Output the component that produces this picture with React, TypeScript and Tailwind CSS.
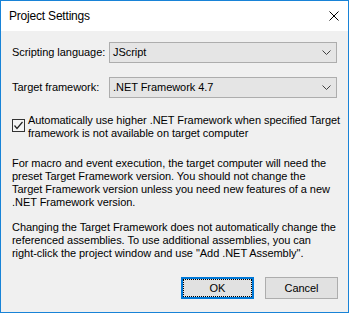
function Combo({ value }: { value: string }) {
    return (
        <div className="flex h-[21px] w-[228px] items-center justify-between border border-[#adadad] bg-[#e5e5e5] pl-[3px] pr-[4px]">
            <span>{value}</span>
            <svg width="9" height="5" viewBox="0 0 9 5" className="mr-[1px]">
                <path d="M0.5 0.5 L4.5 4.5 L8.5 0.5" fill="none" stroke="#404040" strokeWidth="1" />
            </svg>
        </div>
    );
}

export default function App() {
    return (
        <div
            className="flex h-[313px] w-[349px] flex-col border border-[#1883d7] text-[11px] leading-[13px] text-black"
            style={{ fontFamily: '"Liberation Sans", Arial, sans-serif' }}
        >
            <header className="flex h-[30px] shrink-0 items-center justify-between bg-white pl-[8px] pr-[9px]">
                <span className="text-[12px] tracking-[-0.2px]">Project Settings</span>
                <svg width="10" height="10" viewBox="0 0 10 10">
                    <path d="M0.5 0.5 L9.5 9.5 M9.5 0.5 L0.5 9.5" stroke="#000" strokeWidth="1" />
                </svg>
            </header>

            <div className="flex flex-1 flex-col bg-[#f0f0f0] pl-[11px] pr-[10px] tracking-[-0.05px]">
                <div className="mt-[11px] flex items-center">
                    <span className="w-[97px]">Scripting language:</span>
                    <Combo value="JScript" />
                </div>
                <div className="mt-[14px] flex items-center">
                    <span className="w-[97px]">Target framework:</span>
                    <Combo value=".NET Framework 4.7" />
                </div>

                <div className="mt-[16px] flex">
                    <div className="mt-[5px] flex h-[13px] w-[13px] shrink-0 items-center justify-center border border-[#333] bg-[#f4f4f4]">
                        <svg width="11" height="11" viewBox="0 0 11 11">
                            <path d="M1.5 5.5 L4 8.5 L9.5 2" fill="none" stroke="#222" strokeWidth="1.2" />
                        </svg>
                    </div>
                    <p className="ml-[3px] whitespace-nowrap">
                        Automatically use higher .NET Framework when specified Target
                        <br />
                        framework is not available on target computer
                    </p>
                </div>

                <p className="mt-[17px] whitespace-nowrap">
                    For macro and event execution, the target computer will need the
                    <br />
                    preset Target Framework version. You should not change the
                    <br />
                    Target Framework version unless you need new features of a new
                    <br />
                    .NET Framework version.
                </p>

                <p className="mt-[12px] whitespace-nowrap">
                    Changing the Target Framework does not automatically change the
                    <br />
                    referenced assemblies. To use additional assemblies, you can
                    <br />
                    right-click the project window and use "Add .NET Assembly".
                </p>

                <div className="mt-[17px] flex justify-end gap-[11px]">
                    <button className="h-[22px] w-[73px] border-2 border-[#0078d7] bg-[#e1e1e1] p-0">
                        <span className="flex h-full w-full items-center justify-center border border-dotted border-black">OK</span>
                    </button>
                    <button className="h-[22px] w-[73px] border border-[#adadad] bg-[#e1e1e1]">Cancel</button>
                </div>
            </div>
        </div>
    );
}
